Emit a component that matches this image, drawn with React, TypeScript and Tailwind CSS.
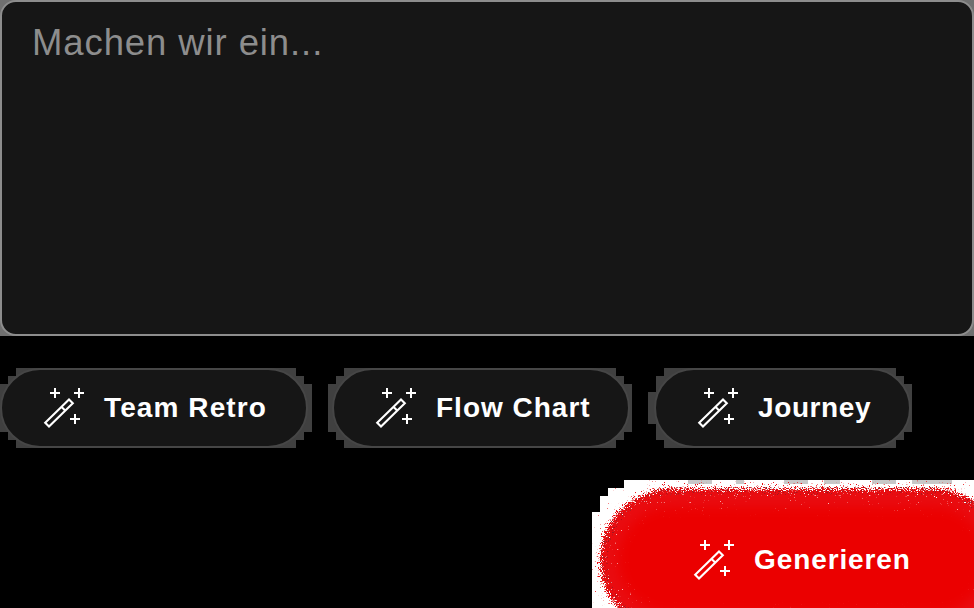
import React from "react";

function WandIcon() {
  return (
    <svg viewBox="0 0 40 40" className="h-10 w-10 shrink-0 overflow-visible" fill="none" stroke="currentColor" strokeWidth="2">
      <path d="M11 0v10M6 5h10M35 0v10M30 5h10M31 26v10M26 31h10" shapeRendering="crispEdges" />
      <path d="M25 11.4l3.8 3.8L5 38.6l-3.8-3.8zM17.6 18.9l3.8 3.8" strokeWidth="2.1" />
    </svg>
  );
}

type PillProps = {
  label: string;
  className: string;
  tracking: string;
  haloBox: string;
  halo: string;
};

function Pill({ label, className, tracking, haloBox, halo }: PillProps) {
  return (
    <button className={`relative h-20 shrink-0 ${className}`}>
      <svg className={`absolute top-0 h-20 overflow-visible ${haloBox}`} fill="#404040" shapeRendering="crispEdges">
        <path d={halo} />
      </svg>
      <span className="relative flex h-20 items-center gap-5 rounded-full border-2 border-[#464646] bg-[#161616] pl-[42px] text-[28px] font-bold text-white">
        <WandIcon />
        <span className={`whitespace-nowrap ${tracking}`}>{label}</span>
      </span>
    </button>
  );
}

const pills: PillProps[] = [
  {
    label: "Team Retro",
    className: "w-[308px]",
    tracking: "tracking-[1.1px]",
    haloBox: "left-0 w-[312px]",
    halo: "M16 0H296V8H304V16H312V64H304V72H296V80H16V72H8V64H0V16H8V8H16Z",
  },
  {
    label: "Flow Chart",
    className: "ml-6 w-[298px]",
    tracking: "tracking-[1px]",
    haloBox: "-left-1 w-[304px]",
    halo: "M16 0H288V8H296V16H304V64H296V72H288V80H16V72H8V64H0V16H8V8H16Z",
  },
  {
    label: "Journey",
    className: "ml-6 w-[257px]",
    tracking: "tracking-[0.6px]",
    haloBox: "-left-1.5 w-[264px]",
    halo: "M16 0H248V8H256V16H264V64H256V72H248V80H16V72H8V56H0V24H8V8H16Z",
  },
];

function GrainyGlow() {
  return (
    <svg className="absolute inset-0 h-32 w-[382px]" viewBox="592 480 382 128">
      <defs>
        <filter id="grain" filterUnits="userSpaceOnUse" x="580" y="465" width="450" height="200" colorInterpolationFilters="sRGB">
          <feGaussianBlur in="SourceAlpha" stdDeviation="4" result="soft" />
          <feTurbulence type="fractalNoise" baseFrequency="0.85" numOctaves="2" seed="7" result="noise" />
          <feComposite in="soft" in2="noise" operator="arithmetic" k2="1" k3="1.7" k4="-0.85" />
          <feComponentTransfer result="mask">
            <feFuncA type="linear" slope="6" intercept="-2.5" />
          </feComponentTransfer>
          <feFlood floodColor="#e90c10" />
          <feComposite in2="mask" operator="in" />
        </filter>
        <filter id="specks" filterUnits="userSpaceOnUse" x="580" y="465" width="450" height="200" colorInterpolationFilters="sRGB">
          <feTurbulence type="fractalNoise" baseFrequency="0.8" numOctaves="2" seed="21" />
          <feComponentTransfer result="dots">
            <feFuncA type="linear" slope="10" intercept="-6.1" />
          </feComponentTransfer>
          <feFlood floodColor="#a01820" />
          <feComposite in2="dots" operator="in" />
          <feComposite in2="SourceAlpha" operator="in" />
        </filter>
        <filter id="softEdge" x="-10%" y="-20%" width="120%" height="140%">
          <feGaussianBlur stdDeviation="6" />
        </filter>
        <clipPath id="glowArea">
          <path d="M624 480H974V608H592V512H600V496H608V488H624Z" />
        </clipPath>
      </defs>
      <path d="M624 480H974V608H592V512H600V496H608V488H624Z" fill="#fff" shapeRendering="crispEdges" />
      <path d="M688 480h24v4h-24zM736 480h8v4h-8zM784 480h24v4h-24zM824 480h16v4h-16zM872 480h24v4h-24zM912 480h40v4h-40z" fill="#c7c7c7" />
      <g clipPath="url(#glowArea)">
        <rect x="600" y="489" width="405" height="142" rx="71" filter="url(#grain)" />
        <rect x="604" y="491" width="397" height="138" rx="69" fill="none" stroke="#000" strokeWidth="8" filter="url(#specks)" />
        <rect x="618" y="507" width="369" height="106" rx="53" fill="#eb0000" filter="url(#softEdge)" />
      </g>
    </svg>
  );
}

export default function App() {
  return (
    <main className="flex h-[608px] w-[974px] flex-col overflow-hidden bg-black font-['Liberation_Sans',Arial,sans-serif]">
      <div className="h-[336px] shrink-0 bg-[#707070]">
        <textarea
          className="block h-full w-full resize-none rounded-2xl border-2 border-[#8d8d8d] bg-[#161616] px-[30px] py-[18px] text-[36.5px] leading-[45px] tracking-[0.9px] text-white outline-none placeholder:text-[#8d8d8d]"
          placeholder="Machen wir ein..."
        />
      </div>
      <div className="mt-8 flex h-20 shrink-0">
        {pills.map((pill) => (
          <Pill key={pill.label} {...pill} />
        ))}
      </div>
      <button className="relative mt-8 flex h-32 w-[382px] shrink-0 self-end pt-10 text-white">
        <GrainyGlow />
        <span className="relative flex h-20 items-center gap-5 pl-[102px] text-[28px] font-bold tracking-[0.9px]">
          <WandIcon />
          <span>Generieren</span>
        </span>
      </button>
    </main>
  );
}
